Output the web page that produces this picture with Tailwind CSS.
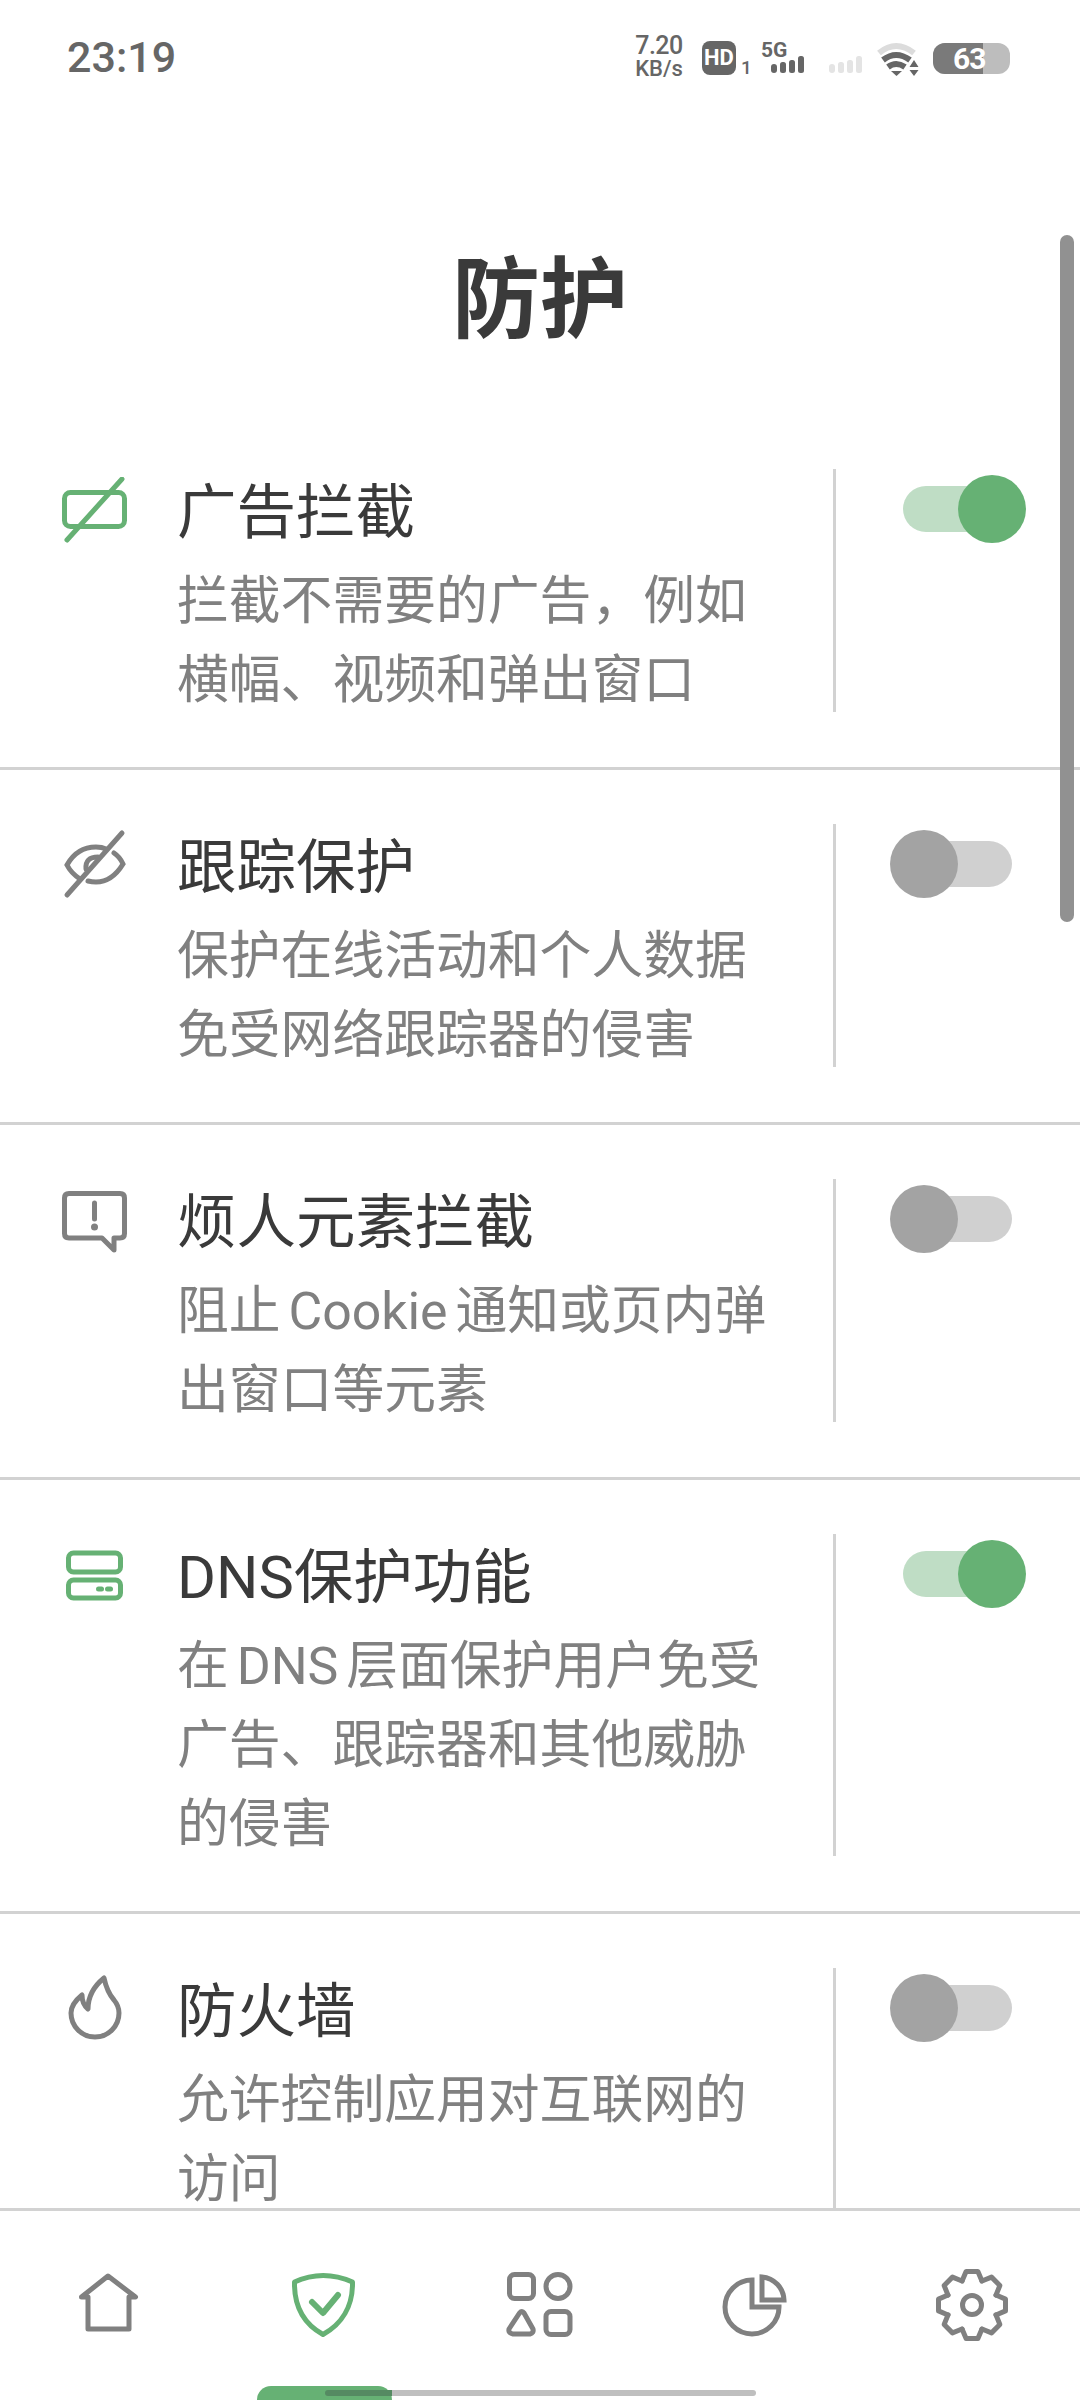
<!DOCTYPE html>
<html lang="zh">
<head>
  <meta charset="UTF-8">
  <title>防护</title>
  <script src="https://cdn.jsdelivr.net/npm/@tailwindcss/browser@4"></script>
</head>
<body class="bg-white font-['Roboto','Noto_Sans_CJK_SC',sans-serif]">
  <div class="w-[1080px] h-[2400px] flex flex-col overflow-hidden relative">

    <!-- status bar -->
    <div class="h-[114px] shrink-0 flex items-start justify-between pl-[67px] pr-[70px] text-[#666]">
      <div class="mt-[32px] text-[43px] leading-[50px] font-medium">23:19</div>
      <div class="flex items-start mt-[18px]">
        <div class="mt-[15px] w-[56px] flex flex-col items-center text-[#666] font-medium">
          <span class="text-[25px] leading-[25px] tracking-[-0.5px]">7.20</span>
          <span class="text-[22px] leading-[22px]">KB/s</span>
        </div>
        <div class="ml-[15px] mt-[23px] w-[34px] h-[34px] rounded-[8px] bg-[#666] text-white text-[22px] leading-[34px] font-bold text-center">HD</div>
        <span class="ml-[5px] w-[13px] mt-[40px] text-[19px] leading-[20px] font-medium">1</span>
        <div class="ml-[7px] mt-[23px] w-[46px] relative h-[34px]">
          <span class="absolute left-0 top-0 text-[21px] leading-[18px] font-bold">5G</span>
          <svg class="absolute left-0 top-0" width="46" height="34" viewBox="0 0 46 34" fill="#666">
            <rect x="10" y="23" width="6" height="9" rx="3"/><rect x="19" y="21" width="6" height="11" rx="2.5"/><rect x="28" y="19" width="6" height="13" rx="2.5"/><rect x="37" y="15" width="6" height="17" rx="2.5"/>
          </svg>
        </div>
        <svg class="ml-[21px] mt-[23px]" width="36" height="34" viewBox="0 0 36 34" fill="#e4e4e4">
          <rect x="1" y="23" width="6" height="9" rx="3"/><rect x="10" y="21" width="6" height="11" rx="2.5"/><rect x="19" y="19" width="6" height="13" rx="2.5"/><rect x="28" y="15" width="6" height="17" rx="2.5"/>
        </svg>
        <svg class="ml-[12px] mt-[24px]" width="44" height="36" viewBox="0 0 44 36" fill="none">
          <path d="M3 11 Q20 -3 38 11" stroke="#dcdcdc" stroke-width="6"/>
          <path d="M7 18 Q20 8 34 18" stroke="#666" stroke-width="6"/>
          <path d="M12 25 Q20 19 29 25" stroke="#666" stroke-width="6"/>
          <path d="M15 29 H26 L20.5 34 Z" fill="#666"/>
          <path d="M38 18 L42.500 25 H33.500 Z M33.500 28 H42.500 L38 34 Z" fill="#666"/>
        </svg>
        <div class="ml-[13px] mt-[25px] w-[77px] h-[31px] rounded-[12px] bg-[#bdbdbd] relative">
          <div class="w-[50px] h-full rounded-l-[12px] bg-[#7a7a7a]"></div>
          <span class="absolute left-[20px] top-0 text-white text-[30px] leading-[31px] font-bold tracking-[-1px]">63</span>
        </div>
      </div>
    </div>

    <!-- heading -->
    <div class="h-[301px] shrink-0 pt-[124px] text-center text-[88px] leading-[124px] font-bold text-[#3a3a3a]">防护</div>

    <!-- list -->
    <div class="flex-1 min-h-0 overflow-hidden">

      <div class="flex pt-[54px] pb-[55px] border-b-[3px] border-[#d2d2d2]">
        <div class="w-[177px] shrink-0 pl-[60px] pt-[8px]">
          <svg width="70" height="70" viewBox="0 0 70 70" fill="none" stroke="#66b174" stroke-width="5" stroke-linecap="round">
            <rect x="4.500" y="15.500" width="60" height="34" rx="6"/>
            <path d="M7 63 L62 2"/>
          </svg>
        </div>
        <div class="w-[656px] shrink-0 -mb-[8px]">
          <div class="text-[59.500px] leading-[89px] text-[#3a3a3a]">广告拦截</div>
          <div class="mt-[4px] w-[610px] text-[51.800px] leading-[79px] [word-spacing:-5px] text-[#808080]">拦截不需要的广告，例如横幅、视频和弹出窗口</div>
        </div>
        <div class="w-[3px] shrink-0 bg-[#d2d2d2]"></div>
        <div class="ml-[67px] pt-[17px]">
          <div class="relative w-[109px] h-[46px] rounded-full bg-[#bfddc5]">
            <div class="absolute -top-[11px] -right-[14px] w-[68px] h-[68px] rounded-full bg-[#66b174]"></div>
          </div>
        </div>
      </div>

      <div class="flex pt-[54px] pb-[55px] border-b-[3px] border-[#d2d2d2]">
        <div class="w-[177px] shrink-0 pl-[60px] pt-[5px]">
          <svg width="70" height="70" viewBox="0 0 70 70" fill="none" stroke="#808080" stroke-width="5" stroke-linecap="round">
            <path d="M7 66 L62 4"/>
            <path d="M20 50 Q11 44 7 36 Q17 18 36 18 Q42 18 46 20"/>
            <path d="M28 52 Q32 53 36 53 Q52 53 63 35 Q60 28 54 24"/>
            <path d="M26 40 Q25 28 38 28"/>
          </svg>
        </div>
        <div class="w-[656px] shrink-0 -mb-[8px]">
          <div class="text-[59.500px] leading-[89px] text-[#3a3a3a]">跟踪保护</div>
          <div class="mt-[4px] w-[610px] text-[51.800px] leading-[79px] [word-spacing:-5px] text-[#808080]">保护在线活动和个人数据免受网络跟踪器的侵害</div>
        </div>
        <div class="w-[3px] shrink-0 bg-[#d2d2d2]"></div>
        <div class="ml-[67px] pt-[17px]">
          <div class="relative w-[109px] h-[46px] rounded-full bg-[#d0d0d0]">
            <div class="absolute -top-[11px] -left-[13px] w-[68px] h-[68px] rounded-full bg-[#a3a3a3]"></div>
          </div>
        </div>
      </div>

      <div class="flex pt-[54px] pb-[55px] border-b-[3px] border-[#d2d2d2]">
        <div class="w-[177px] shrink-0 pl-[60px] pt-[11px]">
          <svg width="70" height="70" viewBox="0 0 70 70" fill="none" stroke="#808080" stroke-width="5" stroke-linecap="round" stroke-linejoin="round">
            <path d="M9 3.500 H60 Q64.500 3.500 64.500 8 V43.500 Q64.500 48 60 48 H54 V60 L42 48 H9 Q4.500 48 4.500 43.500 V8 Q4.500 3.500 9 3.500 Z"/>
            <path d="M34.500 13 V29"/>
            <circle cx="34.500" cy="37" r="3.500" fill="#808080" stroke="none"/>
          </svg>
        </div>
        <div class="w-[656px] shrink-0 -mb-[8px]">
          <div class="text-[59.500px] leading-[89px] text-[#3a3a3a]">烦人元素拦截</div>
          <div class="mt-[4px] w-[610px] text-[51.800px] leading-[79px] [word-spacing:-5px] text-[#808080]">阻止 Cookie 通知或页内弹出窗口等元素</div>
        </div>
        <div class="w-[3px] shrink-0 bg-[#d2d2d2]"></div>
        <div class="ml-[67px] pt-[17px]">
          <div class="relative w-[109px] h-[46px] rounded-full bg-[#d0d0d0]">
            <div class="absolute -top-[11px] -left-[13px] w-[68px] h-[68px] rounded-full bg-[#a3a3a3]"></div>
          </div>
        </div>
      </div>

      <div class="flex pt-[54px] pb-[55px] border-b-[3px] border-[#d2d2d2]">
        <div class="w-[177px] shrink-0 pl-[60px] pt-[16px]">
          <svg width="70" height="60" viewBox="0 0 70 60" fill="none" stroke="#66b174" stroke-width="5">
            <rect x="8.500" y="3" width="52" height="19" rx="5"/>
            <rect x="8.500" y="30" width="52" height="18" rx="5"/>
            <rect x="36" y="36.500" width="8" height="5" rx="2.500" fill="#66b174" stroke="none"/>
            <rect x="45" y="36.500" width="8" height="5" rx="2.500" fill="#66b174" stroke="none"/>
          </svg>
        </div>
        <div class="w-[656px] shrink-0 -mb-[8px]">
          <div class="text-[59.500px] leading-[89px] text-[#3a3a3a]">DNS保护功能</div>
          <div class="mt-[4px] w-[610px] text-[51.800px] leading-[79px] [word-spacing:-5px] text-[#808080]">在 DNS 层面保护用户免受广告、跟踪器和其他威胁的侵害</div>
        </div>
        <div class="w-[3px] shrink-0 bg-[#d2d2d2]"></div>
        <div class="ml-[67px] pt-[17px]">
          <div class="relative w-[109px] h-[46px] rounded-full bg-[#bfddc5]">
            <div class="absolute -top-[11px] -right-[14px] w-[68px] h-[68px] rounded-full bg-[#66b174]"></div>
          </div>
        </div>
      </div>

      <div class="flex pt-[54px]">
        <div class="w-[177px] shrink-0 pl-[60px] pt-[5px]">
          <svg width="70" height="70" viewBox="0 0 70 70" fill="none" stroke="#808080" stroke-width="5" stroke-linejoin="round">
            <path d="M44 5 Q47 19 54 27 Q59 33 59 40 A24 24 0 0 1 11 40 Q11 31 22 22 Q22 31 28 36 Q28 18 44 5 Z"/>
          </svg>
        </div>
        <div class="w-[656px] shrink-0">
          <div class="text-[59.500px] leading-[89px] text-[#3a3a3a]">防火墙</div>
          <div class="mt-[4px] w-[610px] text-[51.800px] leading-[79px] [word-spacing:-5px] text-[#808080]">允许控制应用对互联网的访问</div>
        </div>
        <div class="w-[3px] shrink-0 bg-[#d2d2d2] self-stretch h-[300px]"></div>
        <div class="ml-[67px] pt-[17px]">
          <div class="relative w-[109px] h-[46px] rounded-full bg-[#d0d0d0]">
            <div class="absolute -top-[11px] -left-[13px] w-[68px] h-[68px] rounded-full bg-[#a3a3a3]"></div>
          </div>
        </div>
      </div>
    </div>

    <!-- scrollbar -->
    <div class="absolute left-[1060px] top-[235px] w-[14px] h-[687px] rounded-full bg-[#919191]"></div>

    <!-- bottom nav -->
    <div class="h-[192px] shrink-0 bg-white border-t-[3px] border-[#d2d2d2] relative">
      <div class="flex h-[130px] pt-[53px] pl-[66px]">
        <svg class="w-[216px] shrink-0" width="216" height="80" viewBox="0 0 216 80" fill="none" stroke="#808080" stroke-width="5" stroke-linejoin="round" stroke-linecap="round">
          <path d="M15.500 33 L42 12 L69.500 33 H63 V65 H22 V33 Z"/>
        </svg>
        <svg class="w-[216px] shrink-0" width="216" height="80" viewBox="0 0 216 80" fill="none" stroke="#66b174" stroke-width="5" stroke-linejoin="round" stroke-linecap="round">
          <path d="M12.500 18 Q41 5 70.500 18 C71 42 60 60 41 70.500 C22 60 12 42 12.500 18 Z"/>
          <path d="M30 38 L41 49 L56 31" stroke-width="6"/>
        </svg>
        <svg class="w-[216px] shrink-0" width="216" height="80" viewBox="0 0 216 80" fill="none" stroke="#808080" stroke-width="5" stroke-linejoin="round">
          <rect x="11.500" y="10.500" width="24" height="24" rx="5"/>
          <circle cx="60" cy="22.500" r="12"/>
          <path d="M21.500 49 Q24 46 26 49 L35 65 Q36 69 32 70 H15 Q10 69 11 65 Z"/>
          <rect x="48" y="47.500" width="24" height="23" rx="5"/>
        </svg>
        <svg class="w-[216px] shrink-0" width="216" height="80" viewBox="0 0 216 80" fill="none" stroke="#808080" stroke-width="5">
          <path d="M38 16 A27 27 0 1 0 65 43 H38 Z"/>
          <path d="M48 13 A24 24 0 0 1 70 36 H48 Z"/>
        </svg>
        <svg class="w-[80px] shrink-0 ml-[2px] mt-[1px]" width="80" height="80" viewBox="-40 -40 80 80" fill="none" stroke="#808080" stroke-width="5" stroke-linejoin="round" stroke-linecap="round">
          <defs><path id="tooth" d="M-9.950 -24 L-5.900 -33.500 H5.900 L9.950 -24"/></defs>
          <use href="#tooth"/><use href="#tooth" transform="rotate(45)"/><use href="#tooth" transform="rotate(90)"/><use href="#tooth" transform="rotate(135)"/><use href="#tooth" transform="rotate(180)"/><use href="#tooth" transform="rotate(225)"/><use href="#tooth" transform="rotate(270)"/><use href="#tooth" transform="rotate(315)"/>
          <circle r="9.500"/>
        </svg>
      </div>
      <!-- gesture bar and the active tab marker -->
      <div class="absolute left-[325px] top-[179px] w-[431px] h-[6px] rounded-full bg-[#bfbfbf]"></div>
      <div class="absolute left-[257px] top-[175px] w-[135px] h-[14px] rounded-t-[14px] bg-[#66b174]"></div>
      <div class="absolute left-[325px] top-[179px] w-[67px] h-[6px] rounded-l-full bg-[#558a62]"></div>
    </div>
  </div>
</body>
</html>
